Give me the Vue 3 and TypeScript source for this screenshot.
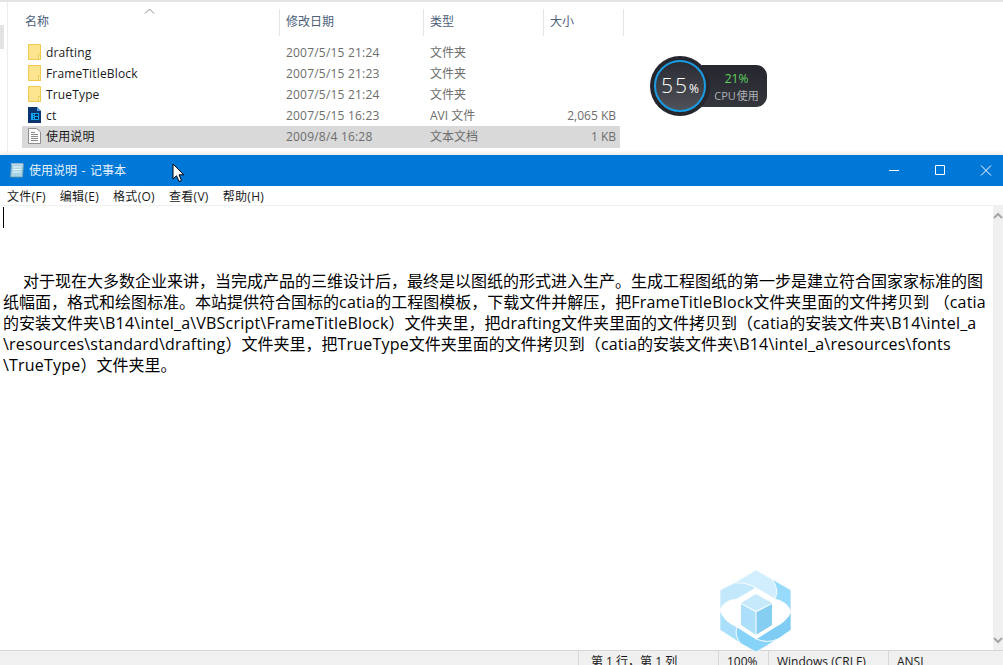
<script setup lang="ts">
type FileRow = {
  name: string
  date: string
  kind: string
  size: string
  icon: 'folder' | 'avi' | 'txt'
  selected?: boolean
}

const columns = [
  { label: '名称', cls: 'col-name' },
  { label: '修改日期', cls: 'col-date' },
  { label: '类型', cls: 'col-kind' },
  { label: '大小', cls: 'col-size' }
]

const files: FileRow[] = [
  { name: 'drafting', date: '2007/5/15 21:24', kind: '文件夹', size: '', icon: 'folder' },
  { name: 'FrameTitleBlock', date: '2007/5/15 21:23', kind: '文件夹', size: '', icon: 'folder' },
  { name: 'TrueType', date: '2007/5/15 21:24', kind: '文件夹', size: '', icon: 'folder' },
  { name: 'ct', date: '2007/5/15 16:23', kind: 'AVI 文件', size: '2,065 KB', icon: 'avi' },
  { name: '使用说明', date: '2009/8/4 16:28', kind: '文本文档', size: '1 KB', icon: 'txt', selected: true }
]

const menus = ['文件(F)', '编辑(E)', '格式(O)', '查看(V)', '帮助(H)']

const lines = [
  '对于现在大多数企业来讲，当完成产品的三维设计后，最终是以图纸的形式进入生产。生成工程图纸的第一步是建立符合国家家标准的图',
  '纸幅面，格式和绘图标准。本站提供符合国标的catia的工程图模板，下载文件并解压，把FrameTitleBlock文件夹里面的文件拷贝到 （catia',
  '的安装文件夹\\B14\\intel_a\\VBScript\\FrameTitleBlock）文件夹里，把drafting文件夹里面的文件拷贝到（catia的安装文件夹\\B14\\intel_a',
  '\\resources\\standard\\drafting）文件夹里，把TrueType文件夹里面的文件拷贝到（catia的安装文件夹\\B14\\intel_a\\resources\\fonts',
  '\\TrueType）文件夹里。'
]

// latin runs are a touch wider in the original font, so they get their own span
const textRuns = lines.map((line) =>
  (line.match(/[\x20-\x7e]+|[^\x20-\x7e]+/g) ?? []).map((text) => ({
    text,
    latin: /^[\x20-\x7e]/.test(text)
  }))
)

const status = [
  { text: '第 1 行，第 1 列', width: 140 },
  { text: '100%', width: 50 },
  { text: 'Windows (CRLF)', width: 120 },
  { text: 'ANSI', width: 115 }
]

// pinwheel blades of the watermark, outer edge then back along the inner hexagon
const blades = [
  { d: 'M14 13 36 0 52 9Q60 20 55 29L36 18Q26 12 14 13Z', fill: '#d0eefd' },
  { d: 'M52 9 71 20V42Q68 32 55 29Q60 20 52 9Z', fill: '#98dafb' },
  { d: 'M71 42V60L58 69Q48 74 36 69L55 57Q66 52 71 42Z', fill: '#7fcdf5' },
  { d: 'M58 69 36 82 20 73Q14 64 17 57L36 69Q48 74 58 69Z', fill: '#86d3fa' },
  { d: 'M20 73 0 60V40Q4 52 17 57Q14 64 20 73Z', fill: '#a9dffa' },
  { d: 'M0 40V20L14 13Q26 12 36 18L17 29Q4 30 0 40Z', fill: '#c4e8fb' }
]
</script>

<template>
  <div class="screen">
    <section class="explorer">
      <div class="rail"><span class="rail-thumb"></span></div>
      <div class="listing">
        <svg class="sort-arrow" width="11" height="6" viewBox="0 0 11 6">
          <path d="M1 5.500 5.500 1 10 5.500" fill="none" stroke="#8a8a8a" />
        </svg>
        <div class="file-head">
          <div v-for="col in columns" :key="col.label" class="head-cell" :class="col.cls">{{ col.label }}</div>
        </div>
        <div class="file-list">
          <div v-for="file in files" :key="file.name" class="file-row" :class="{ selected: file.selected }">
            <div class="col-name name-cell">
              <svg v-if="file.icon === 'folder'" class="file-icon" width="13" height="16" viewBox="0 0 13 16">
                <path d="M.5 .5H12.500V15.500H.5Z" fill="#fde48f" stroke="#f0c94f" />
                <path d="M10.500 10.500H12.500V15.500H10.500Z" fill="#fff0b8" stroke="#f0c94f" />
              </svg>
              <svg v-else-if="file.icon === 'avi'" class="file-icon" width="13" height="16" viewBox="0 0 13 16">
                <path d="M0 0H9L13 4V16H0Z" fill="#08356f" />
                <path d="M9 0 13 4H9Z" fill="#4aa3e8" />
                <path d="M3 6H11V13H3Z" fill="#12a6f5" />
                <path d="M5 7H6V8H5ZM5 9H6V10H5ZM5 11H6V12H5ZM7 7H10V9H7ZM7 10H10V12H7Z" fill="#06264f" />
              </svg>
              <svg v-else class="file-icon" width="13" height="16" viewBox="0 0 13 16">
                <path d="M.5 .5H8.500L12.500 4V15.500H.5Z" fill="#fbfbfb" stroke="#8f8f8f" />
                <path d="M3 4.500H7M3 6.500H10M3 8.500H10M3 10.500H10M3 12.500H10" stroke="#8a8a8a" />
              </svg>
              <span class="file-name">{{ file.name }}</span>
            </div>
            <div class="col-date meta">{{ file.date }}</div>
            <div class="col-kind meta">{{ file.kind }}</div>
            <div class="col-size meta size-cell">{{ file.size }}</div>
          </div>
        </div>
      </div>

      <div class="cpu-widget">
        <div class="cpu-dial">
          <div class="cpu-ring"><span class="cpu-value">55</span><span class="cpu-pct">%</span></div>
        </div>
        <div class="cpu-pill">
          <span class="cpu-load">21%</span>
          <span class="cpu-label">CPU 使用</span>
        </div>
      </div>
    </section>

    <section class="notepad">
      <header class="titlebar">
        <svg class="app-icon" width="16" height="16" viewBox="0 0 16 16">
          <path d="M2.500 2H14.500L13.500 15H1.500Z" fill="#a9d3e6" stroke="#6f98ad" stroke-width=".8" />
          <path d="M4 5H12M4 7.500H12M4 10H11.500" stroke="#e9f6fb" />
          <path d="M3 1V3M5 1V3M7 1V3M9 1V3M11 1V3M13 1V3" stroke="#e8eef1" />
        </svg>
        <span class="title-text">使用说明 - 记事本</span>
        <div class="window-btns">
          <svg width="46" height="31" viewBox="0 0 46 31"><path d="M18 15.500H28" stroke="#fff" /></svg>
          <svg width="46" height="31" viewBox="0 0 46 31"><path d="M18.500 10.500H27.500V19.500H18.500Z" fill="none" stroke="#fff" /></svg>
          <svg width="46" height="31" viewBox="0 0 46 31"><path d="M18 10.500 28 20.500M28 10.500 18 20.500" stroke="#fff" /></svg>
        </div>
      </header>
      <nav class="menubar">
        <span v-for="menu in menus" :key="menu" class="menu-item">{{ menu }}</span>
      </nav>
      <div class="editor">
        <div class="text-area">
          <span class="caret"></span>
          <p v-for="(runs, idx) in textRuns" :key="idx" class="text-line"><span v-for="(run, i) in runs" :key="i" :class="{ latin: run.latin }">{{ run.text }}</span></p>
        </div>
        <div class="scrollbar">
          <svg width="10" height="8" viewBox="0 0 10 8"><path d="M1 6 5 2 9 6" fill="none" stroke="#a6a6a6" stroke-width="2" /></svg>
          <svg width="10" height="8" viewBox="0 0 10 8"><path d="M1 2 5 6 9 2" fill="none" stroke="#a6a6a6" stroke-width="2" /></svg>
        </div>
      </div>
      <footer class="statusbar">
        <span v-for="item in status" :key="item.text" class="status-cell" :style="{ width: item.width + 'px' }">{{ item.text }}</span>
      </footer>
    </section>

    <svg class="mouse-cursor" width="13" height="20" viewBox="0 0 13 20">
      <path d="M1 1V16L4.500 12.800 7 18.500 9.500 17.400 7 11.800H11.800Z" fill="#fff" stroke="#000" />
    </svg>

    <svg class="watermark" width="72" height="82" viewBox="0 0 72 82">
      <path v-for="blade in blades" :key="blade.d" :d="blade.d" :fill="blade.fill" stroke="#fff" stroke-width=".7" />
      <path d="M36 18 55 29V57L36 69 17 57V29Z" fill="#fff" />
      <path d="M36 24 52 33 36 41 21 33Z" fill="#c6e9fb" />
      <path d="M21 34 35.500 42V64.500L21 55Z" fill="#acdffa" />
      <path d="M36.500 42 52 34V55L36.500 64.500Z" fill="#86cdf2" />
    </svg>
  </div>
</template>

<style scoped>
.screen {
  position: relative;
  width: 1003px;
  height: 665px;
  overflow: hidden;
  display: flex;
  flex-direction: column;
  background: #fff;
  font-family: "Open Sans", "Noto Sans CJK SC", sans-serif;
}

.explorer {
  position: relative;
  height: 155px;
  flex: none;
  display: flex;
  border-top: 2px solid #e3e3e3;
  box-sizing: border-box;
  background: linear-gradient(#fff 148px, #efefef);
}

.rail {
  width: 7px;
  flex: none;
  border-right: 1px solid #eeeeee;
  padding-top: 23px;
}

.rail-thumb {
  display: block;
  width: 4px;
  height: 24px;
  background: #e3e3e3;
}

.listing {
  position: relative;
  flex: none;
  margin-left: 13px;
  width: 603px;
}

.sort-arrow {
  position: absolute;
  left: 123px;
  top: 6px;
}

.file-head {
  display: flex;
  height: 40px;
  padding-top: 7px;
  box-sizing: border-box;
}

.head-cell {
  height: 27px;
  line-height: 26px;
  padding-left: 4px;
  box-sizing: border-box;
  font-size: 12px;
  color: #4c607a;
  border-right: 1px solid #e5e5e5;
}

.col-name {
  width: 259px;
  flex: none;
}

.col-date {
  width: 144px;
  flex: none;
}

.col-kind {
  width: 120px;
  flex: none;
}

.col-size {
  width: 80px;
  flex: none;
}

.head-cell.col-date,
.head-cell.col-kind,
.head-cell.col-size {
  padding-left: 6px;
}

.file-row {
  display: flex;
  align-items: center;
  height: 21px;
  padding-bottom: 1px;
  box-sizing: border-box;
  font-size: 12px;
}

.file-row.selected {
  height: 22px;
  padding-bottom: 2px;
  width: 598px;
  margin-left: 1px;
  background: #d9d9d9;
}

.file-row.selected .name-cell {
  width: 258px;
  padding-left: 6px;
}

.name-cell {
  display: flex;
  align-items: center;
  gap: 5px;
  padding-left: 7px;
  box-sizing: border-box;
}

.file-icon {
  flex: none;
}

.file-name {
  color: #1a1a1a;
  font-size: 12px;
  letter-spacing: .15px;
}

.meta {
  color: #6d6d6d;
  padding-left: 6px;
  box-sizing: border-box;
}

.col-date.meta {
  letter-spacing: .2px;
}

.size-cell {
  padding: 0 8px 0 0;
  text-align: right;
}

.cpu-widget {
  position: absolute;
  left: 650px;
  top: 54px;
  display: flex;
  align-items: center;
}

.cpu-dial {
  position: relative;
  z-index: 1;
  width: 60px;
  height: 60px;
  box-sizing: border-box;
  padding: 4px;
  border-radius: 50%;
  background: #26272e;
}

.cpu-ring {
  height: 100%;
  box-sizing: border-box;
  display: flex;
  align-items: baseline;
  justify-content: center;
  padding-top: 10px;
  border: 2px solid #1b9be2;
  border-radius: 50%;
  color: #fff;
  background: linear-gradient(#2b2c33, #50525a);
}

.cpu-value {
  font-size: 21px;
  font-weight: 300;
  line-height: 26px;
  letter-spacing: 2px;
}

.cpu-pct {
  font-size: 12px;
}

.cpu-pill {
  margin-left: -8px;
  width: 65px;
  height: 42px;
  padding: 2px 0 0 4px;
  box-sizing: border-box;
  display: flex;
  flex-direction: column;
  align-items: center;
  justify-content: center;
  border-radius: 0 11px 11px 0;
  background: linear-gradient(#26272e, #34363d);
}

.cpu-load {
  color: #5fd25f;
  font-size: 12px;
  line-height: 17px;
}

.cpu-label {
  color: #aeb0b4;
  font-size: 11px;
  line-height: 17px;
  word-spacing: -2px;
}

.notepad {
  flex: 1;
  min-height: 0;
  display: flex;
  flex-direction: column;
}

.titlebar {
  height: 31px;
  flex: none;
  display: flex;
  align-items: center;
  padding: 0 0 1px 9px;
  box-sizing: border-box;
  background: #0078d7;
}

.app-icon {
  flex: none;
}

.title-text {
  margin-left: 4px;
  font-size: 12px;
  word-spacing: 1.500px;
  color: #e8f3fb;
}

.window-btns {
  margin-left: auto;
  display: flex;
  margin-right: -6px;
}

.menubar {
  height: 19px;
  flex: none;
  display: flex;
  align-items: center;
  padding-left: 7px;
  gap: 14px;
  border-bottom: 1px solid #f0f0f0;
  background: #fff;
}

.menu-item {
  font-size: 12px;
  letter-spacing: .3px;
  color: #1a1a1a;
}

.editor {
  flex: 1;
  min-height: 0;
  display: flex;
}

.text-area {
  position: relative;
  flex: 1;
  padding-top: 65px;
  overflow: hidden;
}

.caret {
  position: absolute;
  left: 3px;
  top: 1px;
  width: 1px;
  height: 21px;
  background: #000;
}

.text-line {
  margin: 0;
  height: 21px;
  line-height: 21px;
  font-size: 16px;
  color: #000;
  white-space: pre;
  padding-left: 3px;
}

.text-line:first-of-type {
  text-indent: 20px;
}

.latin {
  letter-spacing: .2px;
}

.scrollbar {
  width: 10px;
  flex: none;
  display: flex;
  flex-direction: column;
  justify-content: space-between;
  padding: 6px 0;
  box-sizing: border-box;
  background: #f0f0f0;
}

.statusbar {
  height: 15px;
  flex: none;
  display: flex;
  padding-left: 578px;
  box-sizing: border-box;
  border-top: 1px solid #d7d7d7;
  background: #f0f0f0;
  overflow: hidden;
}

.status-cell {
  flex: none;
  box-sizing: border-box;
  padding: 0 0 0 8px;
  border-left: 1px solid #d7d7d7;
  font-size: 12px;
  line-height: 22px;
  color: #1a1a1a;
  white-space: nowrap;
}

.status-cell:first-child {
  padding-left: 12px;
}

.mouse-cursor {
  position: absolute;
  left: 172px;
  top: 163px;
}

.watermark {
  position: absolute;
  left: 720px;
  top: 570px;
}
</style>
